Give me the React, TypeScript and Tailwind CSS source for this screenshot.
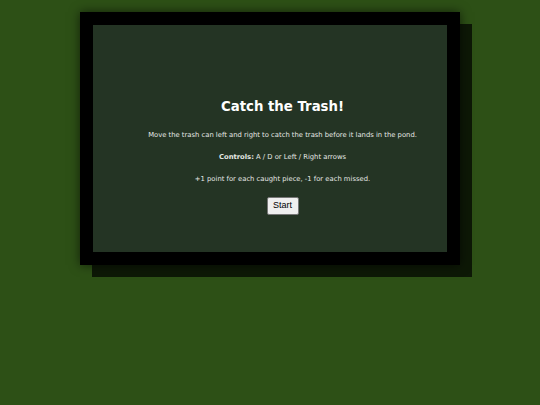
export default function App() {
  return (
    <div className="w-[540px] h-[405px] bg-[#2d5016] pt-3 font-['DejaVu_Sans',Verdana,sans-serif]">
      <div className="mx-auto w-[380px] h-[253px] border-[13px] border-black bg-[#243424] shadow-[0_0_10px_rgba(0,0,0,0.6),12px_12px_0_rgba(0,0,0,0.7)]">
        <div className="flex flex-col items-center pt-[73px] pl-[25px] text-center text-[#e4e8e4]">
          <h2 className="text-[13.3px] font-bold leading-[18px] text-white">Catch the Trash!</h2>
          <p className="mt-[15px] text-[6.8px] leading-[9px]">
            Move the trash can left and right to catch the trash before it lands in the pond.
          </p>
          <p className="mt-[13px] text-[6.8px] leading-[9px]">
            <span className="font-bold">Controls:</span> A / D or Left / Right arrows
          </p>
          <p className="mt-[13px] text-[6.8px] leading-[9px]">
            +1 point for each caught piece, -1 for each missed.
          </p>
          <button className="mt-[13px] w-8 h-[18px] bg-[#efefef] border border-[#767676] rounded-[2px] text-[9px] text-black font-['Liberation_Sans',Arial,sans-serif]">
            Start
          </button>
        </div>
      </div>
    </div>
  );
}
